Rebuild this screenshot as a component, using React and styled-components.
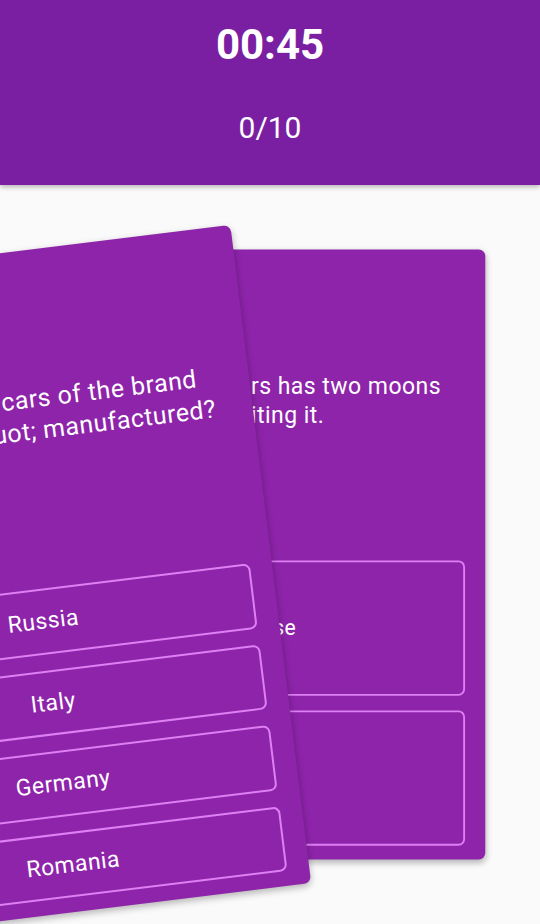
import React from 'react';
import styled, { createGlobalStyle, css } from 'styled-components';

const Global = createGlobalStyle`
  html, body {
    margin: 0;
    padding: 0;
    height: 100%;
    overflow: hidden;
    background: #fafafa;
  }
  body {
    font-family: Roboto, "Noto Sans", "Liberation Sans", sans-serif;
    -webkit-font-smoothing: antialiased;
  }
  #root { height: 100%; }
`;

const Screen = styled.div`
  height: 924px;
  display: flex;
  flex-direction: column;
  overflow: hidden;
  background: #fafafa;
`;

const Header = styled.header`
  flex: 0 0 185px;
  box-sizing: border-box;
  padding-top: 20px;
  background: #7b1fa2;
  color: #fff;
  display: flex;
  flex-direction: column;
  align-items: center;
  box-shadow: 0 2px 5px rgba(0, 0, 0, 0.28);
  position: relative;
  z-index: 2;
`;

const Timer = styled.div`
  font-size: 42px;
  font-weight: 700;
  line-height: 50px;
`;

const Counter = styled.div`
  margin-top: 38px;
  font-size: 30px;
  font-weight: 400;
  line-height: 40px;
`;

const Stack = styled.main`
  flex: 1;
  display: grid;
  place-items: center;
`;

const variants = {
  back: css`
    transform: scale(0.92);
  `,
  front: css`
    transform: translate(-231.5px, 28px) rotate(-7deg);
  `,
};

const Card = styled.section`
  grid-area: 1 / 1;
  width: 468px;
  height: 663px;
  box-sizing: border-box;
  padding: 0 22px 15px;
  background: #8e24aa;
  border-radius: 7px;
  box-shadow: 0 3px 7px rgba(0, 0, 0, 0.28);
  display: flex;
  flex-direction: column;
  color: #fff;
  ${(p) => variants[p.$variant]}
`;

const Question = styled.div`
  flex: 1;
  padding-bottom: 8px;
  display: flex;
  align-items: center;
  justify-content: center;
  text-align: center;
  font-size: 25px;
  line-height: 32px;
  letter-spacing: 0.02em;
`;

const Answers = styled.div`
  flex: 0 0 310px;
  display: flex;
  flex-direction: column;
  gap: 16px;
`;

const Answer = styled.div`
  flex: 1;
  box-sizing: border-box;
  border: 2px solid #de7ff4;
  border-radius: 7px;
  display: flex;
  align-items: center;
  justify-content: center;
  font-size: 23px;
  letter-spacing: 0.02em;
`;

const cards = [
  {
    variant: 'back',
    question: 'The planet Mars has two moons orbiting it.',
    answers: ['False', 'True'],
  },
  {
    variant: 'front',
    question: 'Where are the cars of the brand &quot;Dacia&quot; manufactured?',
    answers: ['Russia', 'Italy', 'Germany', 'Romania'],
  },
];

export default function App() {
  return (
    <Screen>
      <Global />
      <Header>
        <Timer>00:45</Timer>
        <Counter>0/10</Counter>
      </Header>
      <Stack>
        {cards.map((c) => (
          <Card key={c.variant} $variant={c.variant}>
            <Question>{c.question}</Question>
            <Answers>
              {c.answers.map((a) => (
                <Answer key={a}>{a}</Answer>
              ))}
            </Answers>
          </Card>
        ))}
      </Stack>
    </Screen>
  );
}
